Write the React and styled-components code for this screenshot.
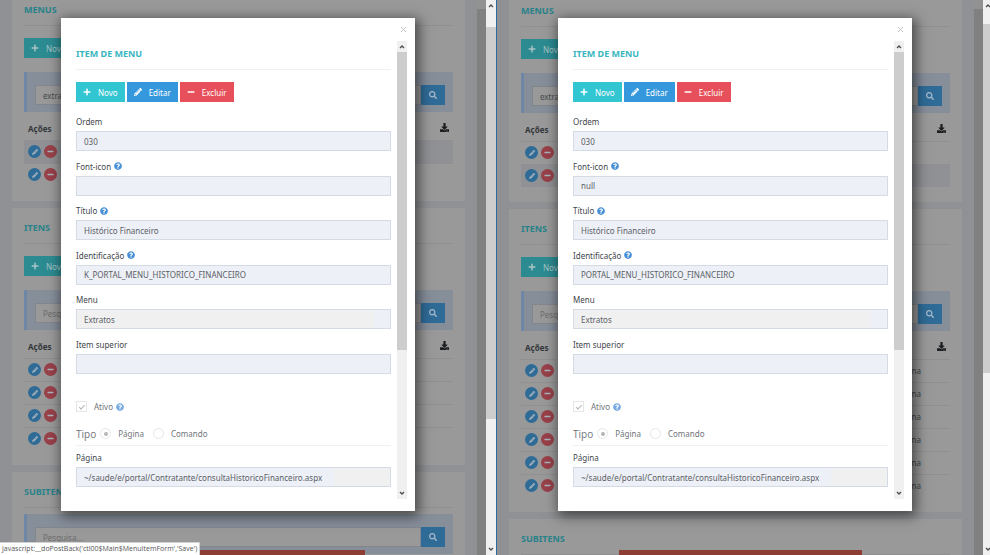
import React, { useId } from "react";
import styled, { createGlobalStyle, css } from "styled-components";
import {
  FaPlus,
  FaMinus,
  FaPencilAlt,
  FaQuestionCircle,
  FaSearch,
  FaDownload,
} from "react-icons/fa";

const GlobalStyle = createGlobalStyle`
  *, *::before, *::after { box-sizing: border-box; }
  body { margin: 0; overflow: hidden; background: #8f9194; }
  body, button, input { font-family: "Noto Sans", "Open Sans", sans-serif; font-size: 8px; }
`;

const Workspace = styled.main`
  display: grid;
  grid-template-columns: 497fr 493fr;
  height: 100vh;
  color: #41464b;
`;

const Pane = styled.section`
  position: relative;
  display: flex;
  min-width: 0;
  overflow: hidden;
  border-right: ${(p) => (p.$divided ? "1px solid #2c6a9f" : "none")};
`;

const Screen = styled.div`
  position: relative;
  display: flex;
  flex: 1;
  min-width: 0;
  overflow: hidden;
`;

/* Page below the dialog */

const PageColumn = styled.div`
  display: flex;
  flex: 1;
  flex-direction: column;
  gap: 7px;
  min-width: 0;
  margin-top: ${(p) => (p.$scrolled ? "-10px" : "-9px")};
  padding: 0 12px;
`;

const Card = styled.article`
  flex: none;
  padding: 11px 12px 15px;
  background: #999;
`;

const CardTitle = styled.h2`
  margin: 0;
  padding-bottom: 7px;
  border-bottom: 1px solid #8f8f8f;
  color: #27828a;
  font-size: 9px;
  font-weight: 700;
  line-height: 17px;
`;

const CardToolbar = styled.div`
  display: flex;
  padding: 12px 0 14px;
`;

const ActionButton = styled.button`
  display: flex;
  align-items: center;
  gap: 7px;
  height: 20px;
  padding: 0 7px;
  border: 0;
  background: ${(p) => p.$color};
  color: ${(p) => (p.$dim ? "#a9c4c6" : "#fff")};
  svg { width: 8px; height: 8px; }
`;

const SearchBox = styled.form`
  display: flex;
  margin-top: ${(p) => (p.$spaced ? "6px" : "0")};
  padding: 13px 8px 7px;
  border-left: 3px solid #6f87a6;
  background: #868e9a;
`;

const SearchInput = styled.input`
  flex: 1;
  min-width: 0;
  height: 20px;
  padding: 0 7px;
  border: 1px solid #83878d;
  background: #999;
  color: #454b50;
  &::placeholder { color: #6c6c6c; opacity: 1; }
`;

const SearchButton = styled.button`
  display: grid;
  place-items: center;
  width: 24px;
  height: 20px;
  padding: 0;
  border: 0;
  background: #2f6b97;
  color: #a9bccb;
`;

const Grid = styled.table`
  width: 100%;
  border-collapse: collapse;
  table-layout: fixed;
`;

const HeadCell = styled.th`
  height: 28px;
  padding: 4px 4px 0;
  color: #33373b;
  font-weight: 700;
  text-align: ${(p) => (p.$end ? "right" : "left")};
`;

const ExportButton = styled.button`
  padding: 0;
  border: 0;
  background: none;
  color: #1c1e20;
  line-height: 0;
`;

const GridRow = styled.tr`
  height: 23px;
  background: ${(p) => (p.$active ? "#8f9194" : "transparent")};
  box-shadow: inset 0 1px #8f8f8f;
`;

const GridCell = styled.td`
  height: 23px;
  padding: 0 ${(p) => (p.$end ? "29px" : "4px")} 0 4px;
  text-align: ${(p) => (p.$end ? "right" : "left")};
`;

const RowActions = styled.div`
  display: flex;
  gap: 3px;
`;

const RoundButton = styled.button`
  display: grid;
  place-items: center;
  width: 13px;
  height: 13px;
  padding: 0;
  border: 0;
  border-radius: 50%;
  background: ${(p) => p.$color};
  color: #a9b4bd;
`;

/* Scrollbars */

const Track = styled.div`
  position: relative;
  display: flex;
  flex: none;
  flex-direction: column;
  width: 10px;
  margin-right: ${(p) => (p.$cut ? "-3px" : "0")};
  background: #f0f0f0;
`;

const TrackEnd = styled.div`
  display: grid;
  place-items: center;
  flex: none;
  height: 11px;
`;

const TrackRail = styled.div`
  display: grid;
  grid-template-rows: ${(p) => p.$rows};
  flex: 1;
`;

const Thumb = styled.div`
  grid-row: 2;
  background: #cdcdcd;
`;

const DimTrack = styled.div`
  flex: none;
  width: 9px;
  background: linear-gradient(#929292 9px, #808080 9px);
`;

/* Dialog */

const Overlay = styled.div`
  position: absolute;
  inset: 0;
  display: flex;
  padding: 18px 71px 44px 61px;
`;

const Dialog = styled.div`
  display: flex;
  flex: 1;
  flex-direction: column;
  min-width: 0;
  padding: 0 8px 12px 15px;
  background: #fff;
  box-shadow: 2px 3px 12px 2px rgba(0, 0, 0, 0.55);
`;

const CloseButton = styled.button`
  align-self: flex-end;
  width: 8px;
  height: 23px;
  padding: 0;
  border: 0;
  background: none;
  color: #c4c4c4;
  line-height: 0;
`;

const DialogScroll = styled.div`
  display: flex;
  flex: 1;
  gap: 6px;
  min-height: 0;
`;

const DialogBody = styled.form`
  display: flex;
  flex: 1;
  flex-direction: column;
  min-width: 0;
  padding-bottom: 12px;
`;

const DialogTitle = styled.h1`
  margin: 0;
  padding: 4px 0 7px;
  border-bottom: 1px solid #f0f0f0;
  color: #38b6c1;
  font-size: 9px;
  font-weight: 700;
  line-height: 17px;
`;

const DialogToolbar = styled.div`
  display: flex;
  gap: 2px;
  padding: 12px 0;
`;

const FieldList = styled.div`
  display: flex;
  flex: 1;
  flex-direction: column;
  justify-content: space-between;
`;

const Field = styled.div`
  display: flex;
  flex-direction: column;
`;

const FieldLabel = styled.label`
  display: flex;
  align-items: center;
  gap: 3px;
  height: 17px;
  padding-bottom: 2px;
  line-height: 15px;
`;

const fieldFills = {
  plain: css`background: #edf0f6;`,
  muted: css`background: linear-gradient(90deg, #f0f0f0 95%, #edf0f6 95%);`,
  mixed: css`background: linear-gradient(90deg, #edf0f6 82%, #f0f0f0 82%);`,
};

const FieldInput = styled.input`
  width: 100%;
  height: 20px;
  padding: 0 7px;
  border: 1px solid #d5dbe5;
  color: #5b6066;
  ${(p) => fieldFills[p.$fill || "plain"]}
`;

const Help = styled(FaQuestionCircle)`
  width: 8px;
  height: 8px;
  color: ${(p) => (p.$soft ? "#76a9e2" : "#468fd6")};
`;

const OptionRow = styled.div`
  display: flex;
  align-items: center;
  height: 15px;
  margin-top: ${(p) => (p.$first ? "25px" : "12px")};
`;

const OptionLabel = styled.label`
  display: flex;
  align-items: center;
  gap: 7px;
  margin-right: ${(p) => (p.$tight ? "3px" : "9px")};
  color: #70757a;
`;

const Toggle = styled.input`
  appearance: none;
  display: grid;
  place-items: center;
  width: 11px;
  height: 11px;
  margin: 0;
  border: 1px solid #e6e6e6;
  border-radius: ${(p) => (p.type === "radio" ? "50%" : "0")};
  background: #fff;
  &[type="radio"]:checked::before {
    content: "";
    width: 4px;
    height: 4px;
    border-radius: 50%;
    background: #b5b5b5;
  }
  &[type="checkbox"]:checked::before {
    content: "";
    width: 6px;
    height: 3px;
    border: solid #b5b5b5;
    border-width: 0 0 1px 1px;
    transform: rotate(-45deg);
  }
`;

const GroupName = styled.span`
  margin-right: 4px;
  color: #70757a;
  font-family: "Open Sans", sans-serif;
  font-size: 10px;
`;

const Rule = styled.hr`
  width: 100%;
  margin: 4px 0;
  border: 0;
  border-top: 1px solid #f0f0f0;
`;

const BottomBanner = styled.div`
  position: absolute;
  bottom: 0;
  left: 25%;
  width: 50%;
  height: 5px;
  background: #8e3d35;
`;

const StatusTip = styled.output`
  position: absolute;
  bottom: 0;
  left: 0;
  height: 13px;
  padding: 0 2px;
  border-top: 1px solid #d0d0d0;
  border-right: 1px solid #d0d0d0;
  background: #fff;
  color: #555;
  font-family: "Open Sans", sans-serif;
  font-size: 7px;
  line-height: 12px;
  white-space: nowrap;
`;

function Arrow({ down }) {
  return (
    <svg width="6" height="5" viewBox="0 0 6 5" aria-hidden="true">
      <path
        d={down ? "M1 1l2 2 2-2" : "M1 4l2-2 2 2"}
        fill="none"
        stroke="#505050"
        strokeWidth="1.4"
      />
    </svg>
  );
}

function Scrollbar({ rows, cut }) {
  return (
    <Track $cut={cut} aria-hidden="true">
      <TrackEnd><Arrow /></TrackEnd>
      <TrackRail $rows={rows}><Thumb /></TrackRail>
      <TrackEnd><Arrow down /></TrackEnd>
    </Track>
  );
}

function Search({ value, spaced }) {
  return (
    <SearchBox $spaced={spaced}>
      <SearchInput aria-label="Pesquisa" placeholder="Pesquisa..." defaultValue={value} />
      <SearchButton type="button" aria-label="Pesquisar"><FaSearch size={8} /></SearchButton>
    </SearchBox>
  );
}

function ListCard({ title, search, rows, active, kind }) {
  return (
    <Card>
      <CardTitle>{title}</CardTitle>
      <CardToolbar>
        <ActionButton type="button" $color="#2c8b91" $dim><FaPlus />Novo</ActionButton>
      </CardToolbar>
      <Search value={search} />
      <Grid>
        <thead>
          <tr>
            <HeadCell>Ações</HeadCell>
            <HeadCell $end>
              <ExportButton type="button" aria-label="Exportar"><FaDownload size={9} /></ExportButton>
            </HeadCell>
          </tr>
        </thead>
        <tbody>
          {Array.from({ length: rows }, (_, i) => (
            <GridRow key={i} $active={i === active}>
              <GridCell>
                <RowActions>
                  <RoundButton type="button" aria-label="Editar" $color="#2f6b97"><FaPencilAlt size={6} /></RoundButton>
                  <RoundButton type="button" aria-label="Excluir" $color="#984149"><FaMinus size={7} /></RoundButton>
                </RowActions>
              </GridCell>
              <GridCell $end>{kind}</GridCell>
            </GridRow>
          ))}
        </tbody>
      </Grid>
    </Card>
  );
}

function TextField({ label, value, help, fill }) {
  const id = useId();
  return (
    <Field>
      <FieldLabel htmlFor={id}>{label}{help && <Help />}</FieldLabel>
      <FieldInput id={id} defaultValue={value} readOnly $fill={fill} />
    </Field>
  );
}

function ItemDialog({ fontIcon, identifier }) {
  const group = useId();
  return (
    <Overlay>
      <Dialog role="dialog" aria-label="Item de menu">
        <CloseButton type="button" aria-label="Fechar">
          <svg width="7" height="7" viewBox="0 0 7 7"><path d="M1 1l5 5M6 1L1 6" stroke="currentColor" /></svg>
        </CloseButton>
        <DialogScroll>
          <DialogBody>
            <DialogTitle>ITEM DE MENU</DialogTitle>
            <DialogToolbar>
              <ActionButton type="button" $color="#32c5d2"><FaPlus />Novo</ActionButton>
              <ActionButton type="button" $color="#3598dc"><FaPencilAlt />Editar</ActionButton>
              <ActionButton type="button" $color="#e7505a"><FaMinus />Excluir</ActionButton>
            </DialogToolbar>
            <FieldList>
              <TextField label="Ordem" value="030" />
              <TextField label="Font-icon" value={fontIcon} help />
              <TextField label="Título" value="Histórico Financeiro" help />
              <TextField label="Identificação" value={identifier} help />
              <TextField label="Menu" value="Extratos" fill="muted" />
              <TextField label="Item superior" value="" />
            </FieldList>
            <OptionRow $first>
              <OptionLabel $tight>
                <Toggle type="checkbox" defaultChecked />
                Ativo
              </OptionLabel>
              <Help $soft />
            </OptionRow>
            <OptionRow role="radiogroup" aria-label="Tipo">
              <GroupName>Tipo</GroupName>
              <OptionLabel><Toggle type="radio" name={group} defaultChecked />Página</OptionLabel>
              <OptionLabel><Toggle type="radio" name={group} />Comando</OptionLabel>
            </OptionRow>
            <Rule />
            <TextField
              label="Página"
              value="~/saude/e/portal/Contratante/consultaHistoricoFinanceiro.aspx"
              fill="mixed"
            />
          </DialogBody>
          <Scrollbar rows="0fr 298fr 138fr" />
        </DialogScroll>
      </Dialog>
    </Overlay>
  );
}

function PortalPane({ divided, activeRow, itemRows, kind, fontIcon, identifier, rail, tip }) {
  return (
    <Pane $divided={divided}>
      <Screen>
        <PageColumn $scrolled={divided}>
          <ListCard title="MENUS" search="extratos" rows={2} active={activeRow} />
          <ListCard title="ITENS" rows={itemRows} kind={kind} />
          <Card>
            <CardTitle>SUBITENS</CardTitle>
            <Search spaced />
          </Card>
        </PageColumn>
        <DimTrack />
        <BottomBanner />
        <ItemDialog fontIcon={fontIcon} identifier={identifier} />
      </Screen>
      <Scrollbar rows={rail} cut={!divided} />
      {tip && <StatusTip>{tip}</StatusTip>}
    </Pane>
  );
}

export default function App() {
  return (
    <>
      <GlobalStyle />
      <Workspace>
        <PortalPane
          divided
          activeRow={0}
          itemRows={4}
          fontIcon=""
          identifier="K_PORTAL_MENU_HISTORICO_FINANCEIRO"
          rail="16fr 392fr 125fr"
          tip="javascript:__doPostBack('ctl00$Main$MenuItemForm','Save')"
        />
        <PortalPane
          activeRow={1}
          itemRows={6}
          kind="Página"
          fontIcon="null"
          identifier="PORTAL_MENU_HISTORICO_FINANCEIRO"
          rail="13fr 349fr 171fr"
        />
      </Workspace>
    </>
  );
}
